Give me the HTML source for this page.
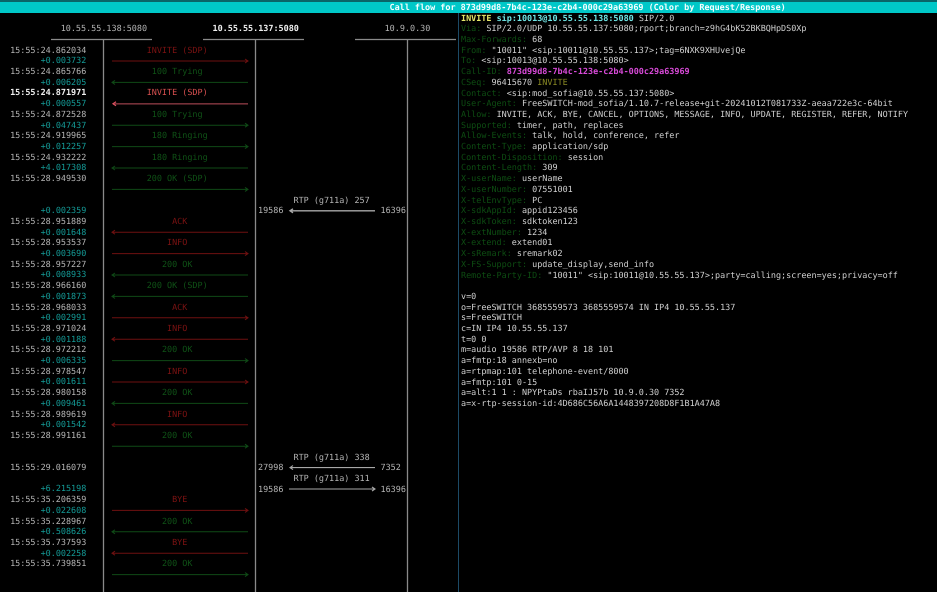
<!DOCTYPE html>
<html>
<head>
<meta charset="utf-8">
<title>Call flow</title>
<style>
html,body{margin:0;padding:0;background:#000;width:937px;height:592px;overflow:hidden}
#w{position:relative;width:937px;height:592px;background:#000;overflow:hidden;filter:blur(.35px)}
pre{position:absolute;margin:0;font-family:"DejaVu Sans Mono","Liberation Mono",monospace;font-size:8.45px;line-height:10.7px;color:#b4b4b4;text-rendering:geometricPrecision;white-space:pre}
#bar{position:absolute;left:0;top:0;width:937px;height:13px;background:#00c8c8;border-top:2px solid #0a6468;box-sizing:border-box}
svg{position:absolute;left:0;top:0}
b{font-weight:bold}
.d{color:#149a96}
.w{color:#f0f0f0;font-weight:bold}
.r{color:#7c1212}
.g{color:#0f5216}
.R{color:#d85050}
.k{color:#0d4d12}
.v{color:#d0d0d0}
</style>
</head>
<body>
<div id="w">
<div id="bar"></div>
<pre style="left:389.5px;top:2.2px;color:#f4ffff;font-weight:bold">Call flow for 873d99d8-7b4c-123e-c2b4-000c29a63969 (Color by Request/Response)</pre>

<svg width="937" height="592" viewBox="0 0 937 592" fill="none">
<g stroke="#8a8a8a" stroke-width="1.3">
<path d="M103.5 39V592M255.5 39V592M407.5 39V592"/>
<path d="M51 39.5H152M203 39.5H304M355 39.5H456"/>
</g>
<path d="M458.5 13V592" stroke="#1c4a66" stroke-width="1"/>
<g stroke="#6e1010" stroke-width="1">
<path d="M112 61H248M245 59L248 61L245 63"/>
<path d="M248 232.2H112M115 230.2L112 232.2L115 234.2"/>
<path d="M112 253.6H248M245 251.6L248 253.6L245 255.6"/>
<path d="M112 317.8H248M245 315.8L248 317.8L245 319.8"/>
<path d="M248 339.2H112M115 337.2L112 339.2L115 341.2"/>
<path d="M112 382H248M245 380L248 382L245 384"/>
<path d="M248 424.8H112M115 422.8L112 424.8L115 426.8"/>
<path d="M112 510.4H248M245 508.4L248 510.4L245 512.4"/>
<path d="M248 553.2H112M115 551.2L112 553.2L115 555.2"/>
</g>
<g stroke="#0f4a16" stroke-width="1">
<path d="M248 82.4H112M115 80.4L112 82.4L115 84.4"/>
<path d="M112 125.2H248M245 123.2L248 125.2L245 127.2"/>
<path d="M112 146.6H248M245 144.6L248 146.6L245 148.6"/>
<path d="M248 168H112M115 166L112 168L115 170"/>
<path d="M112 189.4H248M245 187.4L248 189.4L245 191.4"/>
<path d="M248 275H112M115 273L112 275L115 277"/>
<path d="M248 296.4H112M115 294.4L112 296.4L115 298.4"/>
<path d="M112 360.6H248M245 358.6L248 360.6L245 362.6"/>
<path d="M248 403.4H112M115 401.4L112 403.4L115 405.4"/>
<path d="M112 446.2H248M245 444.2L248 446.2L245 448.2"/>
<path d="M248 531.8H112M115 529.8L112 531.8L115 533.8"/>
<path d="M112 574.6H248M245 572.6L248 574.6L245 576.6"/>
</g>
<path d="M248 103.8H113" stroke="#743038" stroke-width="1.6"/>
<path d="M116 101.8L113 103.8L116 105.8" stroke="#e05060" stroke-width="1.2"/>
<g stroke="#a8a8a8" stroke-width="1.1">
<path d="M375 210.8H290M293 208.8L290 210.8L293 212.8" stroke-width="1.4"/>
<path d="M375 467.6H290M293 465.6L290 467.6L293 469.6"/>
<path d="M289 489H375M372 487L375 489L372 491"/>
</g>
</svg>

<pre style="left:60.7px;top:23.4px">10.55.55.138:5080</pre>
<pre style="left:212.5px;top:23.4px" class="w">10.55.55.137:5080</pre>
<pre style="left:384.6px;top:23.4px">10.9.0.30</pre>

<pre style="left:10.1px;top:44.65px">15:55:24.862034
      <span class="d">+0.003732</span>
15:55:24.865766
      <span class="d">+0.006205</span>
<span class="w">15:55:24.871971</span>
      <span class="d">+0.000557</span>
15:55:24.872528
      <span class="d">+0.047437</span>
15:55:24.919965
      <span class="d">+0.012257</span>
15:55:24.932222
      <span class="d">+4.017308</span>
15:55:28.949530


      <span class="d">+0.002359</span>
15:55:28.951889
      <span class="d">+0.001648</span>
15:55:28.953537
      <span class="d">+0.003690</span>
15:55:28.957227
      <span class="d">+0.008933</span>
15:55:28.966160
      <span class="d">+0.001873</span>
15:55:28.968033
      <span class="d">+0.002991</span>
15:55:28.971024
      <span class="d">+0.001188</span>
15:55:28.972212
      <span class="d">+0.006335</span>
15:55:28.978547
      <span class="d">+0.001611</span>
15:55:28.980158
      <span class="d">+0.009461</span>
15:55:28.989619
      <span class="d">+0.001542</span>
15:55:28.991161


15:55:29.016079

      <span class="d">+6.215198</span>
15:55:35.206359
      <span class="d">+0.022608</span>
15:55:35.228967
      <span class="d">+0.508626</span>
15:55:35.737593
      <span class="d">+0.002258</span>
15:55:35.739851</pre>

<pre style="left:146.7px;top:44.65px"><span class="r">INVITE (SDP)</span>

 <span class="g">100 Trying</span>

<span class="R">INVITE (SDP)</span>

 <span class="g">100 Trying</span>

 <span class="g">180 Ringing</span>

 <span class="g">180 Ringing</span>

<span class="g">200 OK (SDP)</span>



     <span class="r">ACK</span>

    <span class="r">INFO</span>

   <span class="g">200 OK</span>

<span class="g">200 OK (SDP)</span>

     <span class="r">ACK</span>

    <span class="r">INFO</span>

   <span class="g">200 OK</span>

    <span class="r">INFO</span>

   <span class="g">200 OK</span>

    <span class="r">INFO</span>

   <span class="g">200 OK</span>





     <span class="r">BYE</span>

   <span class="g">200 OK</span>

     <span class="r">BYE</span>

   <span class="g">200 OK</span></pre>

<pre style="left:293.5px;top:194.75px">RTP (g711a) 257</pre>
<pre style="left:258px;top:205.45px">19586</pre>
<pre style="left:380.5px;top:205.45px">16396</pre>
<pre style="left:293.5px;top:451.55px">RTP (g711a) 338</pre>
<pre style="left:258px;top:462.25px">27998</pre>
<pre style="left:380.5px;top:462.25px">7352</pre>
<pre style="left:293.5px;top:472.95px">RTP (g711a) 311</pre>
<pre style="left:258px;top:483.65px">19586</pre>
<pre style="left:380.5px;top:483.65px">16396</pre>

<pre class="v" style="left:461px;top:12.65px"><b style="color:#e6e66a">INVITE</b> <b style="color:#6fe6e6">sip:10013@10.55.55.138:5080</b> SIP/2.0
<span class="k">Via:</span> SIP/2.0/UDP 10.55.55.137:5080;rport;branch=z9hG4bK52BKBQHpDS0Xp
<span class="k">Max-Forwards:</span> 68
<span class="k">From:</span> "10011" &lt;sip:10011@10.55.55.137&gt;;tag=6NXK9XHUvejQe
<span class="k">To:</span> &lt;sip:10013@10.55.55.138:5080&gt;
<span class="k">Call-ID:</span> <b style="color:#d84ad8">873d99d8-7b4c-123e-c2b4-000c29a63969</b>
<span class="k">CSeq:</span> 96415670 <span style="color:#8a8a24">INVITE</span>
<span class="k">Contact:</span> &lt;sip:mod_sofia@10.55.55.137:5080&gt;
<span class="k">User-Agent:</span> FreeSWITCH-mod_sofia/1.10.7-release+git-20241012T081733Z-aeaa722e3c-64bit
<span class="k">Allow:</span> INVITE, ACK, BYE, CANCEL, OPTIONS, MESSAGE, INFO, UPDATE, REGISTER, REFER, NOTIFY
<span class="k">Supported:</span> timer, path, replaces
<span class="k">Allow-Events:</span> talk, hold, conference, refer
<span class="k">Content-Type:</span> application/sdp
<span class="k">Content-Disposition:</span> session
<span class="k">Content-Length:</span> 309
<span class="k">X-userName:</span> userName
<span class="k">X-userNumber:</span> 07551001
<span class="k">X-telEnvType:</span> PC
<span class="k">X-sdkAppId:</span> appid123456
<span class="k">X-sdkToken:</span> sdktoken123
<span class="k">X-extNumber:</span> 1234
<span class="k">X-extend:</span> extend01
<span class="k">X-sRemark:</span> sremark02
<span class="k">X-FS-Support:</span> update_display,send_info
<span class="k">Remote-Party-ID:</span> "10011" &lt;sip:10011@10.55.55.137&gt;;party=calling;screen=yes;privacy=off

v=0
o=FreeSWITCH 3685559573 3685559574 IN IP4 10.55.55.137
s=FreeSWITCH
c=IN IP4 10.55.55.137
t=0 0
m=audio 19586 RTP/AVP 8 18 101
a=fmtp:18 annexb=no
a=rtpmap:101 telephone-event/8000
a=fmtp:101 0-15
a=alt:1 1 : NPYPtaDs rbaIJ57b 10.9.0.30 7352
a=x-rtp-session-id:4D686C56A6A1448397208D8F1B1A47A8</pre>
</div>
</body>
</html>
